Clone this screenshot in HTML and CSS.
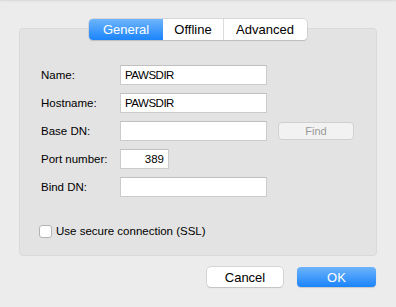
FILE: index.html
```html
<!DOCTYPE html>
<html lang="en">
<head>
    <meta charset="UTF-8">
    <title>Directory Server</title>
    <link rel="stylesheet" href="styles.css">
</head>
<body>
    <div class="dialog">
        <div class="tabs">
            <span class="tab active">General</span>
            <span class="tab">Offline</span>
            <span class="tab">Advanced</span>
        </div>

        <div class="panel">
            <div class="form">
                <label>Name:</label>
                <div class="field">PAWSDIR</div>
                <span></span>

                <label>Hostname:</label>
                <div class="field">PAWSDIR</div>
                <span></span>

                <label>Base DN:</label>
                <div class="field"></div>
                <button class="find" disabled>Find</button>

                <label>Port number:</label>
                <div class="field port">389</div>
                <span></span>

                <label>Bind DN:</label>
                <div class="field"></div>
                <span></span>
            </div>

            <label class="check"><span class="box"></span>Use secure connection (SSL)</label>
        </div>

        <div class="actions">
            <button class="btn">Cancel</button>
            <button class="btn primary">OK</button>
        </div>
    </div>
</body>
</html>
```

FILE: styles.css
```css
html, body {
    margin: 0;
    height: 100%;
}
body {
    font-family: "Liberation Sans", Arial, sans-serif;
    background-color: #ececec;
    color: #000;
    box-shadow: inset 0 2px 2px -1px #d8d8d8;
}
.dialog {
    padding-top: 19px;
}
.tabs {
    display: flex;
    width: 218px;
    height: 21px;
    margin: 0 auto -12px;
    position: relative;
    z-index: 1;
    background-color: #fff;
    border-radius: 4px;
    box-shadow: 0 0 0 0.5px #c2c2c2, 0 1px 1px rgba(0, 0, 0, 0.18);
    font-size: 13px;
}
.tab {
    display: flex;
    align-items: center;
    justify-content: center;
    border-left: 1px solid #dcdcdc;
}
.tab:nth-child(1) { width: 74px; border-left: none; }
.tab:nth-child(2) { width: 60px; }
.tab:nth-child(3) { width: 82px; }
.tab.active {
    color: #fff;
    background: linear-gradient(#6db4fb, #1b84fb);
    border-radius: 4px 0 0 4px;
}
.tab.active + .tab {
    border-left: none;
}
.panel {
    margin: 0 19px;
    height: 228px;
    box-sizing: border-box;
    padding: 36px 0 0 21px;
    background-color: #e3e3e3;
    border: 1px solid #d9d9d9;
    border-radius: 4px;
    font-size: 11.5px;
}
.form {
    display: grid;
    grid-template-columns: 68px 147px 76px;
    grid-auto-rows: 20px;
    column-gap: 11px;
    row-gap: 8px;
    align-items: center;
}
.field {
    height: 20px;
    box-sizing: border-box;
    padding: 0 4px;
    display: flex;
    align-items: center;
    background-color: #fff;
    border: 1px solid #cbcbcb;
    border-top-color: #c0c0c0;
    letter-spacing: -0.5px;
}
.field.port {
    width: 49px;
    justify-content: flex-end;
    letter-spacing: 0;
}
.find {
    height: 18px;
    font-family: inherit;
    font-size: 11px;
    color: #999;
    background-color: #f2f2f2;
    border: 1px solid #d0d0d0;
    border-radius: 4px;
    padding: 0;
}
.check {
    display: flex;
    align-items: center;
    gap: 4px;
    height: 14px;
    margin: 27px 0 0 -2px;
}
.box {
    width: 11px;
    height: 11px;
    background-color: #fff;
    border: 1px solid #b3b3b3;
    border-radius: 3px;
}
.actions {
    display: flex;
    justify-content: flex-end;
    gap: 14px;
    margin-top: 11px;
    padding-right: 20px;
}
.btn {
    height: 20px;
    width: 76px;
    padding: 0;
    font-family: inherit;
    font-size: 13px;
    color: #000;
    background-color: #fff;
    border: none;
    border-radius: 4px;
    box-shadow: 0 0 0 0.5px #bdbdbd, 0 1px 1px rgba(0, 0, 0, 0.15);
}
.btn.primary {
    width: 79px;
    color: #fff;
    background: linear-gradient(#6db4fb, #1b84fb);
    box-shadow: 0 1px 1px rgba(0, 0, 0, 0.15);
}
```
